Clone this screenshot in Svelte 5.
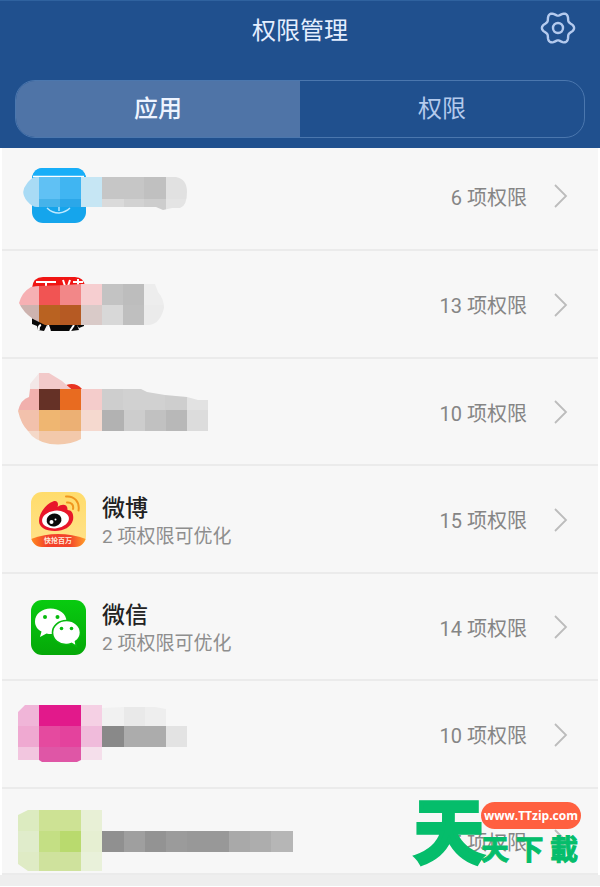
<script lang="ts">
  // [x, y, width, height, fill]
  type Tile = [number, number, number, number, string];

  interface App {
    id: string;
    count: number;
    name?: string;
    hint?: string;
    top?: number;
    height?: number;
    mask?: string;
    tiles?: Tile[];
  }

  const apps: App[] = [
    {
      id: "blue", count: 6, top: 153, height: 88,
      mask: "M36 178H176Q187 180 187 193Q187 207 180 209H172L163 211L156 208H37Q32 208 27 202Q20 193 26 186Q31 178 36 178Z",
      tiles: [
        [18, 178, 21, 34, "#a9dbf5"], [39, 178, 21, 22, "#60c1f4"], [60, 178, 21, 22, "#40b5f2"], [81, 178, 21, 34, "#c6e6f4"],
        [102, 178, 42, 22, "#c6c6c6"], [144, 178, 22, 22, "#c0c0c0"], [166, 178, 22, 22, "#e1e1e1"],
        [39, 200, 21, 12, "#46b3ea"], [60, 200, 21, 12, "#2ba7e9"], [102, 200, 22, 12, "#dadada"], [124, 200, 20, 12, "#d2d2d2"],
        [144, 200, 22, 12, "#cdcdcd"], [166, 200, 22, 12, "#e4e4e4"],
      ],
    },
    {
      id: "red", count: 13, top: 261, height: 88,
      mask: "M31 287Q36 286 39 286L66 285L81 284H155L158 292Q164 299 164 308Q160 324 149 325H45L33 319Q23 312 19 303Q22 292 31 287Z",
      tiles: [
        [18, 284, 21, 21, "#f6b0b3"], [39, 284, 21, 21, "#f15453"], [60, 284, 21, 21, "#f28788"], [81, 284, 21, 21, "#f6ced0"],
        [102, 284, 21, 21, "#c3c3c3"], [123, 284, 21, 21, "#bdbdbd"], [144, 284, 21, 21, "#ededed"],
        [18, 305, 21, 21, "#cdb3af"], [39, 305, 21, 21, "#b96221"], [60, 305, 21, 21, "#b65a23"], [81, 305, 21, 21, "#d9cac8"],
        [102, 305, 21, 21, "#d8d8d8"], [123, 305, 21, 21, "#bfbfbf"], [144, 305, 21, 21, "#ebebeb"],
      ],
    },
    {
      id: "orange", count: 10, top: 368, height: 88,
      mask: "M30 389V384L39 373H49L62 381L71 389H141L147 392L165 395L187 397L198 400H208V431H81V439Q69 446 50 444Q34 441 28 431Q21 424 18 411Q21 399 29 397Z",
      tiles: [
        [28, 372, 11, 17, "#f3e7e7"], [39, 372, 36, 17, "#f2c9c9"],
        [18, 389, 21, 21, "#f1b0ad"], [39, 389, 21, 21, "#653126"], [60, 389, 21, 21, "#e86b20"], [81, 389, 21, 21, "#f4cccb"],
        [102, 389, 21, 21, "#cecece"], [123, 389, 42, 21, "#d1d1d1"], [165, 389, 22, 21, "#cecece"], [187, 389, 21, 21, "#e2e2e2"],
        [18, 410, 21, 21, "#f2c1ac"], [39, 410, 21, 21, "#efb671"], [60, 410, 21, 21, "#ecb074"], [81, 410, 21, 21, "#f5d9cf"],
        [102, 410, 22, 21, "#b2b2b2"], [124, 410, 21, 21, "#cdcdcd"], [145, 410, 21, 21, "#c1c1c1"], [166, 410, 21, 21, "#b8b8b8"], [187, 410, 21, 21, "#dcdcdc"],
        [28, 431, 11, 14, "#f4d8c8"], [39, 431, 42, 14, "#f3c9ab"],
      ],
    },
    { id: "weibo", count: 15, name: "微博", hint: "2 项权限可优化" },
    { id: "wechat", count: 14, name: "微信", hint: "2 项权限可优化" },
    {
      id: "pink", count: 10, top: 691, height: 88,
      mask: "M25 705H102V708L124 707H155L166 709V726H187V747H102V760H81L77 762H42L39 760H18V712Z",
      tiles: [
        [18, 705, 21, 21, "#f0b5d8"], [39, 705, 42, 21, "#e2198b"], [81, 705, 21, 21, "#f5d0e4"], [102, 705, 22, 21, "#f1f1f1"],
        [124, 705, 21, 21, "#e9e9e9"], [145, 705, 21, 21, "#eeeeee"],
        [18, 726, 21, 21, "#efa9d1"], [39, 726, 21, 21, "#e54a9f"], [60, 726, 21, 21, "#e4429d"], [81, 726, 21, 21, "#f0bbdb"],
        [102, 726, 22, 21, "#898989"], [124, 726, 42, 21, "#acacac"], [166, 726, 21, 21, "#e3e3e3"],
        [18, 747, 21, 16, "#f2c6df"], [39, 747, 42, 16, "#df56a6"], [81, 747, 21, 16, "#f5dfeb"],
      ],
    },
    {
      id: "green", count: 5, top: 811, height: 62,
      mask: "M28 811H102V832H293V853H102V872H28L18 865V816Z",
      tiles: [
        [18, 811, 21, 21, "#dcebc0"], [39, 811, 42, 21, "#cde294"], [81, 811, 21, 21, "#e8f0d6"],
        [18, 832, 21, 21, "#e0eccb"], [39, 832, 21, 21, "#c4df84"], [60, 832, 21, 21, "#b9da6e"], [81, 832, 21, 21, "#e6efd2"],
        [18, 853, 21, 20, "#dfebc5"], [39, 853, 42, 20, "#cfe29d"], [81, 853, 21, 20, "#e9f1da"],
        [102, 832, 22, 21, "#909090"], [124, 832, 21, 21, "#9f9f9f"], [145, 832, 21, 21, "#939393"], [166, 832, 21, 21, "#9b9b9b"],
        [187, 832, 42, 21, "#989898"], [229, 832, 21, 21, "#a9a9a9"], [250, 832, 21, 21, "#adadad"], [271, 832, 22, 21, "#b6b6b6"],
      ],
    },
  ];

  let tab = $state("apps");

  // six-lobed outline of the settings gear
  const gear = Array.from({ length: 90 }, (_, i) => {
    const a = (i * Math.PI) / 45;
    const r = 14.2 + 1.9 * Math.cos(6 * a);
    return `${(18 + r * Math.cos(a)).toFixed(2)},${(18 + r * Math.sin(a)).toFixed(2)}`;
  }).join(" ");
</script>

<div class="page">
  <header>
    <div class="bar">
      <h1>权限管理</h1>
      <button class="settings" aria-label="设置">
        <svg width="36" height="36" viewBox="0 0 36 36" fill="none" stroke="#b4caee" stroke-width="2.4">
          <polygon points={gear} stroke-linejoin="round" />
          <circle cx="18" cy="18" r="5" />
        </svg>
      </button>
    </div>
    <div class="tabs" role="tablist">
      <button role="tab" aria-selected={tab === "apps"} class:active={tab === "apps"} onclick={() => (tab = "apps")}>应用</button>
      <button role="tab" aria-selected={tab === "perms"} class:active={tab === "perms"} onclick={() => (tab = "perms")}>权限</button>
    </div>
  </header>

  <main>
    <ul>
      {#each apps as app}
        <li>
          <a href="#{app.id}">
            {#if app.tiles}
              <svg class="art" width="280" height={app.height} viewBox="16 {app.top} 280 {app.height}" aria-hidden="true">
                {#if app.id === "blue"}
                  <rect x="32" y="169" width="54" height="55" rx="11" fill="#15a5ec" />
                  <path d="M32 180V178Q34 169 43 169H75Q84 169 86 178V180Z" fill="#18aef8" />
                  <path d="M33 177.500H84" stroke="#fff" stroke-width="1.400" />
                  <path d="M47 209Q52 214 59 214Q66 213 70 209M59 208V212" fill="none" stroke="#bfe9ff" stroke-width="1.400" />
                {:else if app.id === "red"}
                  <path d="M32 288Q33 277 43 277H75Q84 277 85 287V289H32Z" fill="#f01513" />
                  <path d="M36 282H56M46 282V287M63 280L65 286M70 280L68 286M73 282H83M78 279V287" stroke="#fff" stroke-width="2" />
                  <path d="M32 318L46 324H79L84 325V326L79 328L77 325L79 330L71 331H50L47 325L44 331L38 330L37 326L32 324Z" fill="#080808" />
                  <path d="M39 330Q38 326 41 325M50 331L48 325M70 331L74 325" stroke="#fff" stroke-width="2" fill="none" />
                {:else if app.id === "orange"}
                  <path d="M66 385Q76 382 82 389H71Z" fill="#e83421" />
                {/if}
                <clipPath id="mask-{app.id}"><path d={app.mask} /></clipPath>
                <g clip-path="url(#mask-{app.id})" shape-rendering="crispEdges">
                  {#each app.tiles as [x, y, w, h, fill]}
                    <rect {x} {y} width={w} height={h} {fill} />
                  {/each}
                </g>
              </svg>
            {:else if app.id === "weibo"}
              <svg class="icon" width="55" height="55" viewBox="0 0 55 55" aria-hidden="true">
                <linearGradient id="gold" x2="0" y2="1"><stop stop-color="#ffdc6b" /><stop offset="1" stop-color="#ffe28b" /></linearGradient>
                <linearGradient id="band"><stop stop-color="#ff8a1f" /><stop offset=".3" stop-color="#f3402b" /><stop offset=".7" stop-color="#f3432b" /><stop offset="1" stop-color="#ffa02a" /></linearGradient>
                <clipPath id="weibo-shape"><rect width="55" height="55" rx="11" /></clipPath>
                <g clip-path="url(#weibo-shape)">
                  <rect width="55" height="55" fill="url(#gold)" />
                  <path d="M0 47Q27 37 55 47V55H0Z" fill="url(#band)" />
                </g>
                <path d="M8 29C8 21 15 12 22 9.500C26 8 28 11 26.500 15C31 11.500 37 12 36.500 18C41 18 43 22 42 28C40 35 33 39 24 39C14 39 8 35 8 29Z" fill="#e8162a" />
                <ellipse cx="24.500" cy="27.500" rx="13.500" ry="8.800" transform="rotate(-7 24.500 27.500)" fill="#fff" />
                <ellipse cx="23" cy="28" rx="7.500" ry="6.500" transform="rotate(-15 23 28)" fill="#0a0a0a" />
                <circle cx="20.500" cy="30" r="2" fill="#fff" />
                <circle cx="24.500" cy="27.500" r="1" fill="#fff" />
                <path d="M35 4.500C43 3.500 49 10 47.500 18.500M36 10.500C40 10 43 13 42 17" fill="none" stroke="#f0961e" stroke-width="2" stroke-linecap="round" />
                <text x="27" y="51" text-anchor="middle" font-size="7" font-weight="700" fill="#ffe9dc">快抢百万</text>
              </svg>
            {:else}
              <svg class="icon" width="55" height="55" viewBox="0 0 55 55" aria-hidden="true">
                <linearGradient id="leaf" x2="0" y2="1"><stop stop-color="#08cb10" /><stop offset="1" stop-color="#05a808" /></linearGradient>
                <rect width="55" height="55" rx="11" fill="url(#leaf)" />
                <path d="M19.500 8.500C11 8.500 4 14 4 21.500C4 26 6.500 29.500 10.500 31.500L9 37L15.500 33.500C25 36 35.500 30 35.500 21.500C35.500 14 28.500 8.500 19.500 8.500Z" fill="#fff" />
                <path d="M35.500 20.500C27.500 20.500 21.500 26 21.500 32.500C21.500 39.500 28 45 36 44.500C37.500 44.500 39 44 40.500 43.500L45.500 46.500L44.500 41.500C47.500 39.500 49.500 36.500 49.500 32.500C49.500 26 43.500 20.500 35.500 20.500Z" fill="#fff" stroke="#07b90d" stroke-width="1.600" />
                <g fill="#07bb0d">
                  <circle cx="14" cy="17" r="2" /><circle cx="26.500" cy="17" r="2" />
                  <circle cx="30.500" cy="28.500" r="1.800" /><circle cx="40.500" cy="28.500" r="1.800" />
                </g>
              </svg>
            {/if}
            {#if app.name}
              <span class="info">
                <span class="name">{app.name}</span>
                <span class="hint">{app.hint}</span>
              </span>
            {/if}
            <span class="count">{app.count} 项权限</span>
            <svg class="chevron" width="14" height="24" viewBox="0 0 14 24" fill="none" stroke="#bcbcbc" stroke-width="1.800" aria-hidden="true">
              <path d="M1 1L12 12L1 23" />
            </svg>
          </a>
        </li>
      {/each}
    </ul>

    <div class="watermark">
      <span class="big">天</span>
      <div class="side">
        <span class="url">www.TTzip.com</span>
        <span class="small"><span>天</span><span>下</span><span>載</span></span>
      </div>
    </div>
  </main>
  <div class="foot"></div>
</div>

<style>
  :global(body) { background: #fff; }
  .page { font-family: Roboto, "Noto Sans CJK SC", sans-serif; color: #222; }

  header { box-sizing: border-box; padding: 0 15px 10px; background: #20508e; border-top: 1px solid #2f629f; }
  .bar { display: grid; grid-template-columns: 1fr auto 1fr; align-items: center; height: 56px; margin-bottom: 23px; }
  h1 { grid-column: 2; margin: 0; padding-top: 3px; font-size: 24px; line-height: 32px; font-weight: 400; color: #e4eeff; }
  .settings { justify-self: end; display: block; margin: 0 9px 2px 0; padding: 0; border: 0; background: none; cursor: pointer; }
  .settings svg { display: block; }
  .tabs { display: grid; grid-template-columns: 1fr 1fr; height: 56px; border: 1px solid #4b77ae; border-radius: 20px; overflow: hidden; }
  .tabs button { padding: 0 0 5px; border: 0; background: none; font: inherit; font-size: 24px; color: #b4caec; cursor: pointer; }
  .tabs .active { background: #4f74a7; color: #eef4ff; font-weight: 500; }

  main { position: relative; background: #f7f7f7; border: solid #fff; border-width: 0 2px; }
  ul { list-style: none; margin: 0; padding: 0; }
  li { border-bottom: 2px solid #ebebeb; }
  a { box-sizing: border-box; display: flex; align-items: center; height: 105px; padding: 1px 30px 0 14px; color: inherit; text-decoration: none; }
  li:nth-child(even) a { height: 106px; }
  li:first-child a { height: 101px; padding-top: 0; padding-bottom: 5px; }
  li:last-child a { height: 84px; padding-top: 20px; }
  .art { flex: none; }
  .icon { flex: none; margin-left: 15px; }
  .info { display: flex; flex-direction: column; margin-left: 16px; padding-top: 6px; }
  .name { font-size: 23px; line-height: 28px; font-weight: 500; }
  .hint { font-size: 19px; line-height: 28px; color: #8e8e8e; }
  .count { margin-left: auto; font-size: 20px; color: #858585; white-space: nowrap; }
  .chevron { flex: none; margin-left: 27px; }

  .watermark { position: absolute; right: 17px; bottom: 10px; display: flex; align-items: flex-start; color: #05bd6b; font-family: "Noto Sans CJK TC", sans-serif; font-weight: 700; stroke-linejoin: round; }
  .big { font-size: 70px; line-height: 70px; -webkit-text-stroke: 4px #05bd6b; }
  .side { display: flex; flex-direction: column; gap: 2px; margin-left: -3px; padding-top: 9px; }
  .url { padding: 0 3px; border-radius: 14px; background: #ff6040; color: #fff; font-family: "Open Sans", sans-serif; font-size: 12px; line-height: 27px; text-align: center; }
  .small { display: flex; justify-content: space-between; padding-right: 3px; font-size: 28px; line-height: 34px; -webkit-text-stroke: 1px #05bd6b; }

  .foot { height: 11px; background: #eeeeee; }
</style>
